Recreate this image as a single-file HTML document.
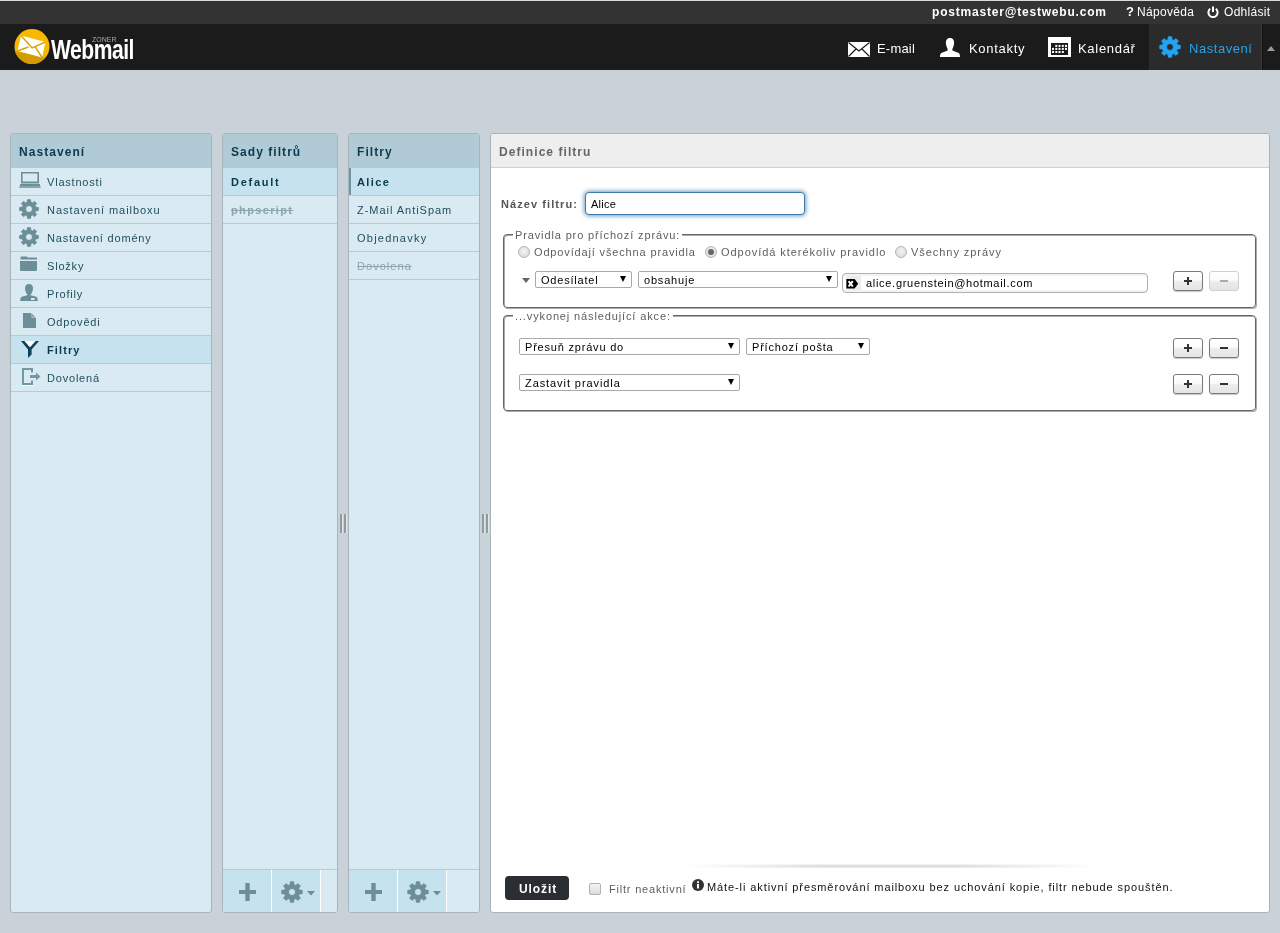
<!DOCTYPE html>
<html><head><meta charset="utf-8">
<style>
*{box-sizing:border-box}
html,body{margin:0;padding:0}
body{width:1280px;height:933px;overflow:hidden;position:relative;background:#cad2d9;font-family:"Liberation Sans",sans-serif;font-size:11px;color:#000}
.a{position:absolute;white-space:nowrap}
svg{position:absolute;display:block}
#top{position:absolute;left:0;top:0;width:1280px;height:24px;background:#333;border-top:1px solid #dcdcdc}
#nav{position:absolute;left:0;top:24px;width:1280px;height:46px;background:#1b1b1b}
.tl{color:#fff;font-size:12px;line-height:14px;letter-spacing:0.3px}
.nv{color:#fff;font-size:13px;line-height:16px;letter-spacing:0.55px}
.pn{position:absolute;top:133px;height:780px;border:1px solid #a9b3bb;border-radius:3px;background:#d9eaf2;overflow:hidden}
.ph{position:absolute;left:0;top:0;right:0;height:34px;background:#b0cbd6}
.ph span{position:absolute;left:8px;top:11px;font-weight:bold;font-size:12px;line-height:14px;letter-spacing:1.05px;color:#0b3a4e}
.row{position:absolute;left:0;right:0;height:28px;border-bottom:1px solid #b3ccd5}
.row span{position:absolute;left:36px;top:8px;font-size:11px;line-height:13px;letter-spacing:0.8px;color:#22505f}
.sel{background:#c6e2ee}
.sel span{font-weight:bold;color:#0b3a4e;letter-spacing:1.1px}
.ico{fill:#6b8e98}
.tb{position:absolute;left:0;right:0;bottom:0;height:43px;border-top:1px solid #b3ccd5;background:#d9eaf2}
.tbb{position:absolute;top:0;height:42px;width:49px;background:#c6e2ee;border-right:1px solid #fff}
.lbl{color:#5e5e5e;font-size:11px;line-height:13px;letter-spacing:0.8px}
.sl{position:absolute;height:17px;border:1px solid #a9a9a9;border-radius:2px;background:#fff}
.sl span{position:absolute;left:5px;top:2px;font-size:11px;line-height:13px;letter-spacing:0.8px;color:#000}
.sl i{position:absolute;top:4px;width:0;height:0;border-left:3.5px solid transparent;border-right:3.5px solid transparent;border-top:6px solid #000}
.btn{position:absolute;width:30px;height:20px;border:1px solid #7a7a7a;border-radius:3px;background:linear-gradient(#fff 0%,#fbfbfb 45%,#ececec 55%,#e4e4e4 100%);box-shadow:0 1px 1px rgba(0,0,0,.22)}
.btn b{position:absolute;background:#333}
.fs{position:absolute;border:1px solid #666;border-radius:4px;box-shadow:1px 1px 0 rgba(102,102,102,.55),inset 1px 1px 0 rgba(102,102,102,.55)}
.lg{position:absolute;background:#fff;padding:0 2px;color:#5e5e5e;font-size:11px;line-height:13px;letter-spacing:0.87px}
.radio{position:absolute;width:12px;height:12px;border-radius:50%;border:1px solid #b5b5b5;background:radial-gradient(circle at 50% 40%,#f4f4f4,#d6d6d6)}
</style></head>
<body style="will-change:transform">
<!-- top bar -->
<div id="top"></div>
<div class="a tl" style="left:932px;top:5px;font-weight:bold;letter-spacing:0.8px">postmaster@testwebu.com</div>
<div class="a tl" style="left:1126px;top:4px;font-weight:bold;font-size:13px;line-height:15px">?</div>
<div class="a tl" style="left:1137px;top:5px">Nápověda</div>
<svg style="left:1207px;top:6px" width="12" height="12" viewBox="0 0 12 12"><path d="M3.2,2.8 A4.6,4.6 0 1,0 8.8,2.8" fill="none" stroke="#fff" stroke-width="2"/><rect x="5" y="0.5" width="2" height="5.5" fill="#fff"/></svg>
<div class="a tl" style="left:1224px;top:5px">Odhlásit</div>

<!-- nav -->
<div id="nav"></div>
<svg style="left:14px;top:28px" width="36" height="37" viewBox="0 0 36 37">
 <defs><clipPath id="cc"><circle cx="18" cy="18.5" r="17.5"/></clipPath></defs>
 <circle cx="18" cy="18.5" r="17.5" fill="#f7b900"/>
 <path d="M0,22.5 L36,30.5 L36,37 L0,37Z" fill="#d29b00" clip-path="url(#cc)"/>
 <path d="M3.5,23 L7,7.5 L31.5,14 L28,29.5Z" fill="#fff"/>
 <path d="M7,7.5 L18,19.8 L31.5,14 M3.5,23 L14.5,19 M28,29.5 L21,18.5" fill="none" stroke="#dba600" stroke-width="1.4"/>
</svg>
<div class="a" style="left:92px;top:36px;color:#a8a8a8;font-size:7px;line-height:8px;letter-spacing:0">ZONER</div>
<div class="a" style="left:51px;top:36px;color:#fff;font-size:27px;line-height:28px;font-weight:bold;letter-spacing:-0.6px;transform:scaleX(0.78);transform-origin:0 0">Webmail</div>

<div class="a" style="left:1149px;top:24px;width:112px;height:46px;background:#2b2b2b"></div>
<div class="a" style="left:1261px;top:24px;width:1px;height:46px;background:#3b3b3b"></div>
<div class="a" style="left:1262px;top:24px;width:1px;height:46px;background:#111"></div>
<svg style="left:1267px;top:46px" width="8" height="5" viewBox="0 0 8 5"><path d="M4,0 L8,5 L0,5Z" fill="#999"/></svg>

<svg style="left:848px;top:42px" width="22" height="15" viewBox="0 0 22 15"><rect x="0" y="0" width="22" height="15" fill="#fff"/><path d="M0.5,0.5 L11,9 L21.5,0.5 M0.5,14.5 L8,7 M21.5,14.5 L14,7" fill="none" stroke="#1b1b1b" stroke-width="1.2"/></svg>
<div class="a nv" style="left:877px;top:41px;letter-spacing:0.2px">E-mail</div>
<svg style="left:940px;top:38px" width="20" height="19" viewBox="0 0 21 19" preserveAspectRatio="none"><path d="M10.5,0 C7,0 6,2.5 6.2,5.5 C6.4,8 7.5,10 8,11 L8,12.5 L1.5,15 C0.5,15.5 0,16.5 0,19 L21,19 C21,16.5 20.5,15.5 19.5,15 L13,12.5 L13,11 C13.5,10 14.6,8 14.8,5.5 C15,2.5 14,0 10.5,0Z" fill="#fff"/></svg>
<div class="a nv" style="left:969px;top:41px;letter-spacing:0.7px">Kontakty</div>
<svg style="left:1048px;top:37px" width="23" height="20" viewBox="0 0 23 20"><rect x="0" y="0" width="23" height="20" fill="#fff"/><rect x="3" y="6" width="17" height="12" fill="#1b1b1b"/><g fill="#fff"><rect x="7.3" y="7.9" width="2" height="2"/><rect x="10.5" y="7.9" width="2" height="2"/><rect x="13.8" y="7.9" width="2" height="2"/><rect x="17" y="7.9" width="2" height="2"/><rect x="4" y="10.9" width="2" height="2"/><rect x="7.3" y="10.9" width="2" height="2"/><rect x="10.5" y="10.9" width="2" height="2"/><rect x="13.8" y="10.9" width="2" height="2"/><rect x="17" y="10.9" width="2" height="2"/><rect x="4" y="14" width="2" height="2"/><rect x="7.3" y="14" width="2" height="2"/><rect x="10.5" y="14" width="2" height="2"/><rect x="13.8" y="14" width="2" height="2"/></g></svg>
<div class="a nv" style="left:1078px;top:41px;letter-spacing:0.7px">Kalendář</div>
<svg style="left:1159px;top:36px" width="22" height="22" viewBox="0 0 22 22"><path fill="#22a4f4" fill-rule="evenodd" stroke="#22a4f4" stroke-width="1" stroke-linejoin="round" d="M9.05,3.66 L9.36,0.83 L12.64,0.83 L12.95,3.66 L14.81,4.43 L17.03,2.65 L19.35,4.97 L17.57,7.19 L18.34,9.05 L21.17,9.36 L21.17,12.64 L18.34,12.95 L17.57,14.81 L19.35,17.03 L17.03,19.35 L14.81,17.57 L12.95,18.34 L12.64,21.17 L9.36,21.17 L9.05,18.34 L7.19,17.57 L4.97,19.35 L2.65,17.03 L4.43,14.81 L3.66,12.95 L0.83,12.64 L0.83,9.36 L3.66,9.05 L4.43,7.19 L2.65,4.97 L4.97,2.65 L7.19,4.43Z M7.50,11.00 a3.5,3.5 0 1,0 7.0,0 a3.5,3.5 0 1,0 -7.0,0Z"/></svg>
<div class="a nv" style="left:1189px;top:41px;color:#26a3ef">Nastavení</div>

<!-- panel 1 -->
<div class="pn" style="left:10px;width:202px">
 <div class="ph"><span>Nastavení</span></div>
 <div class="row" style="top:34px"><span>Vlastnosti</span></div>
 <div class="row" style="top:62px"><span style="letter-spacing:0.94px">Nastavení mailboxu</span></div>
 <div class="row" style="top:90px"><span>Nastavení domény</span></div>
 <div class="row" style="top:118px"><span>Složky</span></div>
 <div class="row" style="top:146px"><span>Profily</span></div>
 <div class="row" style="top:174px"><span>Odpovědi</span></div>
 <div class="row sel" style="top:202px"><span>Filtry</span></div>
 <div class="row" style="top:230px"><span>Dovolená</span></div>
</div>

<!-- panel 2 -->
<div class="pn" style="left:222px;width:116px">
 <div class="ph"><span>Sady filtrů</span></div>
 <div class="row sel" style="top:34px"><span style="left:8px;letter-spacing:1.75px">Default</span></div>
 <div class="row" style="top:62px"><span style="left:8px;font-weight:bold;color:#8ca6ae;text-decoration:line-through;letter-spacing:1.35px">phpscript</span></div>
 <div class="tb"><div class="tbb" style="left:0"></div><div class="tbb" style="left:49px"></div></div>
</div>

<!-- panel 3 -->
<div class="pn" style="left:348px;width:132px">
 <div class="ph"><span>Filtry</span></div>
 <div class="row sel" style="top:34px"><span style="left:8px;letter-spacing:1.4px">Alice</span><div style="position:absolute;left:0;top:0;width:2px;height:27px;background:#6e98a6"></div></div>
 <div class="row" style="top:62px"><span style="left:8px;letter-spacing:0.97px">Z-Mail AntiSpam</span></div>
 <div class="row" style="top:90px"><span style="left:8px;letter-spacing:1.23px">Objednavky</span></div>
 <div class="row" style="top:118px"><span style="left:8px;color:#8ca6ae;text-decoration:line-through;letter-spacing:1.04px">Dovolena</span></div>
 <div class="tb"><div class="tbb" style="left:0"></div><div class="tbb" style="left:49px"></div></div>
</div>

<!-- main panel -->
<div class="pn" style="left:490px;width:780px;background:#fff">
 <div class="ph" style="background:#eee;border-bottom:1px solid #cfcfcf;height:34px"><span style="color:#666">Definice filtru</span></div>
</div>


<!-- nav icons panel1 -->
<svg style="left:19px;top:171px" width="23" height="18" viewBox="0 0 23 18"><path fill="#6b8e98" fill-rule="evenodd" d="M2,1 L20,1 L20,12 L2,12Z M3.6,2.6 L18.4,2.6 L18.4,10.6 L3.6,10.6Z"/><rect x="2" y="12" width="18" height="1" fill="#a5c1c9"/><path d="M1.5,13 L20.5,13 L22,17 L0,17Z" fill="#86a7b0"/><path d="M1.5,13 L20.5,13 L21.2,15 L0.8,15Z" fill="#6b8e98"/></svg>
<svg style="left:19px;top:199px" width="20" height="20" viewBox="0 0 20 20"><path fill="#6b8e98" fill-rule="evenodd" stroke="#6b8e98" stroke-width="1" stroke-linejoin="round" d="M8.16,3.35 L8.50,0.72 L11.50,0.72 L11.84,3.35 L13.40,4.00 L15.50,2.38 L17.62,4.50 L16.00,6.60 L16.65,8.16 L19.28,8.50 L19.28,11.50 L16.65,11.84 L16.00,13.40 L17.62,15.50 L15.50,17.62 L13.40,16.00 L11.84,16.65 L11.50,19.28 L8.50,19.28 L8.16,16.65 L6.60,16.00 L4.50,17.62 L2.38,15.50 L4.00,13.40 L3.35,11.84 L0.72,11.50 L0.72,8.50 L3.35,8.16 L4.00,6.60 L2.38,4.50 L4.50,2.38 L6.60,4.00Z M6.50,10.00 a3.5,3.5 0 1,0 7.0,0 a3.5,3.5 0 1,0 -7.0,0Z"/></svg>
<svg style="left:19px;top:227px" width="20" height="20" viewBox="0 0 20 20"><path fill="#6b8e98" fill-rule="evenodd" stroke="#6b8e98" stroke-width="1" stroke-linejoin="round" d="M8.16,3.35 L8.50,0.72 L11.50,0.72 L11.84,3.35 L13.40,4.00 L15.50,2.38 L17.62,4.50 L16.00,6.60 L16.65,8.16 L19.28,8.50 L19.28,11.50 L16.65,11.84 L16.00,13.40 L17.62,15.50 L15.50,17.62 L13.40,16.00 L11.84,16.65 L11.50,19.28 L8.50,19.28 L8.16,16.65 L6.60,16.00 L4.50,17.62 L2.38,15.50 L4.00,13.40 L3.35,11.84 L0.72,11.50 L0.72,8.50 L3.35,8.16 L4.00,6.60 L2.38,4.50 L4.50,2.38 L6.60,4.00Z M6.50,10.00 a3.5,3.5 0 1,0 7.0,0 a3.5,3.5 0 1,0 -7.0,0Z"/></svg>
<svg style="left:20px;top:256px" width="18" height="16" viewBox="0 0 18 16"><path d="M0.5,1.2 Q0.5,0.6 1.2,0.6 L6.5,0.6 Q7.3,0.6 7.6,1.5 L17,1.5 L17,3.6 L0.5,3.6Z" fill="#6b8e98"/><path d="M0,5 L17,5 L17,14 Q17,15 16,15 L1,15 Q0,15 0,14Z" fill="#6b8e98"/></svg>
<svg style="left:20px;top:284px" width="18" height="17" viewBox="0 0 18 17"><path d="M9,0 C6.3,0 5,1.8 5,4.3 C5,7 6.3,9.5 7.3,10.6 L7.3,11.2 L2.5,12.6 C1,13.1 0.3,14 0.3,15.5 L0.3,17 L17.7,17 L17.7,15.5 C17.7,14 17,13.1 15.5,12.6 L10.7,11.2 L10.7,10.6 C11.7,9.5 13,7 13,4.3 C13,1.8 11.7,0 9,0Z" fill="#6b8e98"/><rect x="11" y="14" width="3.6" height="2" fill="#d9eaf2"/></svg>
<svg style="left:23px;top:313px" width="14" height="15" viewBox="0 0 14 15"><path d="M0,0 L8,0 L13,5 L13,15 L0,15Z" fill="#6b8e98"/><path d="M8.6,0 L13,4.4 L8.6,4.4Z" fill="#d9eaf2"/><path d="M9.2,1 L12,3.8 L9.2,3.8Z" fill="#6b8e98"/></svg>
<svg style="left:21px;top:341px" width="18" height="18" viewBox="0 0 18 18"><path d="M0,0 L3.4,0 L9,6.2 L14.6,0 L18,0 L10.6,8.6 L10.6,13.6 L7,17 L7,8.6Z" fill="#0d4157"/><path d="M3.6,0 L14.4,0 L9,6Z" fill="#fff"/></svg>
<svg style="left:22px;top:368px" width="19" height="18" viewBox="0 0 19 18"><path d="M0,0 L11,0 L11,4.5 L9,4.5 L9,2 L2,2 L2,15 L9,15 L9,12.5 L11,12.5 L11,17 L0,17Z" fill="#7199a3"/><rect x="0" y="17" width="11" height="1" fill="#fff"/><path d="M8,7 L14,7 L14,4.5 L18.5,8.5 L14,12.5 L14,10 L8,10Z" fill="#7199a3"/></svg>

<!-- toolbars -->
<svg style="left:239px;top:883px" width="17" height="18" viewBox="0 0 17 18"><rect x="0" y="7" width="17" height="4" fill="#6b8e98"/><rect x="6.3" y="0" width="4.4" height="18" fill="#6b8e98"/></svg>
<svg style="left:281px;top:881px" width="22" height="22" viewBox="0 0 22 22"><path fill="#6b8e98" fill-rule="evenodd" stroke="#6b8e98" stroke-width="1" stroke-linejoin="round" d="M9.05,3.66 L9.36,0.83 L12.64,0.83 L12.95,3.66 L14.81,4.43 L17.03,2.65 L19.35,4.97 L17.57,7.19 L18.34,9.05 L21.17,9.36 L21.17,12.64 L18.34,12.95 L17.57,14.81 L19.35,17.03 L17.03,19.35 L14.81,17.57 L12.95,18.34 L12.64,21.17 L9.36,21.17 L9.05,18.34 L7.19,17.57 L4.97,19.35 L2.65,17.03 L4.43,14.81 L3.66,12.95 L0.83,12.64 L0.83,9.36 L3.66,9.05 L4.43,7.19 L2.65,4.97 L4.97,2.65 L7.19,4.43Z M7.40,11.00 a3.6,3.6 0 1,0 7.2,0 a3.6,3.6 0 1,0 -7.2,0Z"/></svg>
<svg style="left:307px;top:891px" width="8" height="5" viewBox="0 0 8 5"><path d="M0,0 L8,0 L4,4.5Z" fill="#6b8e98"/></svg>
<svg style="left:365px;top:883px" width="17" height="18" viewBox="0 0 17 18"><rect x="0" y="7" width="17" height="4" fill="#6b8e98"/><rect x="6.3" y="0" width="4.4" height="18" fill="#6b8e98"/></svg>
<svg style="left:407px;top:881px" width="22" height="22" viewBox="0 0 22 22"><path fill="#6b8e98" fill-rule="evenodd" stroke="#6b8e98" stroke-width="1" stroke-linejoin="round" d="M9.05,3.66 L9.36,0.83 L12.64,0.83 L12.95,3.66 L14.81,4.43 L17.03,2.65 L19.35,4.97 L17.57,7.19 L18.34,9.05 L21.17,9.36 L21.17,12.64 L18.34,12.95 L17.57,14.81 L19.35,17.03 L17.03,19.35 L14.81,17.57 L12.95,18.34 L12.64,21.17 L9.36,21.17 L9.05,18.34 L7.19,17.57 L4.97,19.35 L2.65,17.03 L4.43,14.81 L3.66,12.95 L0.83,12.64 L0.83,9.36 L3.66,9.05 L4.43,7.19 L2.65,4.97 L4.97,2.65 L7.19,4.43Z M7.40,11.00 a3.6,3.6 0 1,0 7.2,0 a3.6,3.6 0 1,0 -7.2,0Z"/></svg>
<svg style="left:433px;top:891px" width="8" height="5" viewBox="0 0 8 5"><path d="M0,0 L8,0 L4,4.5Z" fill="#6b8e98"/></svg>

<!-- splitters -->
<div class="a" style="left:340px;top:514px;width:2px;height:19px;background:#8d9ba3"></div><div class="a" style="left:342px;top:514px;width:1px;height:19px;background:#e2e6e9"></div>
<div class="a" style="left:344px;top:514px;width:2px;height:19px;background:#8d9ba3"></div><div class="a" style="left:346px;top:514px;width:1px;height:19px;background:#e2e6e9"></div>
<div class="a" style="left:482px;top:514px;width:2px;height:19px;background:#8d9ba3"></div><div class="a" style="left:484px;top:514px;width:1px;height:19px;background:#e2e6e9"></div>
<div class="a" style="left:486px;top:514px;width:2px;height:19px;background:#8d9ba3"></div><div class="a" style="left:488px;top:514px;width:1px;height:19px;background:#e2e6e9"></div>

<!-- main content -->
<div class="a" style="left:501px;top:198px;font-weight:bold;color:#555;font-size:11px;line-height:13px;letter-spacing:1.08px">Název filtru:</div>
<div class="a" style="left:585px;top:192px;width:220px;height:23px;border:1px solid #3b7cab;border-radius:4px;box-shadow:0 0 4px 1px rgba(58,123,171,.75);background:#fff"></div>
<div class="a" style="left:591px;top:198px;font-size:11px;line-height:13px;letter-spacing:0.25px">Alice</div>

<div class="fs" style="left:503px;top:234px;width:753px;height:74px"></div>
<div class="lg" style="left:513px;top:229px">Pravidla pro příchozí zprávu:</div>
<div class="radio" style="left:518px;top:246px"></div>
<div class="a lbl" style="left:534px;top:246px;letter-spacing:0.85px">Odpovídají všechna pravidla</div>
<div class="radio" style="left:705px;top:246px"><div style="position:absolute;left:2px;top:2px;width:6px;height:6px;border-radius:50%;background:#666"></div></div>
<div class="a lbl" style="left:721px;top:246px;letter-spacing:0.95px">Odpovídá kterékoliv pravidlo</div>
<div class="radio" style="left:895px;top:246px"></div>
<div class="a lbl" style="left:911px;top:246px;letter-spacing:0.95px">Všechny zprávy</div>

<svg style="left:522px;top:278px" width="8" height="5" viewBox="0 0 8 5"><path d="M0,0 L8,0 L4,5Z" fill="#666"/></svg>
<div class="sl" style="left:535px;top:271px;width:97px"><span>Odesílatel</span><i style="left:84px"></i></div>
<div class="sl" style="left:638px;top:271px;width:200px"><span>obsahuje</span><i style="left:187px"></i></div>
<div class="a" style="left:842px;top:273px;width:306px;height:20px;border:1px solid #b0b0b0;border-radius:4px;background:#fff;box-shadow:inset 0 2px 0 #f3f3f3,inset 0 -2px 0 #f3f3f3"></div>
<div class="a" style="left:846px;top:276px;width:15px;height:14px;background:#ececec"></div>
<svg style="left:846px;top:279px" width="13" height="10" viewBox="0 0 13 10"><path d="M0.4,0 L8.6,0 L12.2,4.8 L8.6,9.6 L0.4,9.6Z" fill="#000"/><path d="M2.6,2.1 L6.8,7.5 M6.8,2.1 L2.6,7.5" stroke="#fff" stroke-width="2"/></svg>
<div class="a" style="left:866px;top:277px;font-size:11px;line-height:13px;letter-spacing:0.7px">alice.gruenstein@hotmail.com</div>
<div class="btn" style="left:1173px;top:271px"><b style="left:10px;top:8px;width:8px;height:2px"></b><b style="left:13px;top:5px;width:2px;height:8px"></b></div>
<div class="btn" style="left:1209px;top:271px;border-color:#d0d0d0;box-shadow:none"><b style="left:10px;top:8px;width:8px;height:2px;background:#aaa"></b></div>

<div class="fs" style="left:503px;top:315px;width:753px;height:96px"></div>
<div class="lg" style="left:513px;top:310px">...vykonej následující akce:</div>
<div class="sl" style="left:519px;top:338px;width:221px"><span>Přesuň zprávu do</span><i style="left:208px"></i></div>
<div class="sl" style="left:746px;top:338px;width:124px"><span>Příchozí pošta</span><i style="left:111px"></i></div>
<div class="btn" style="left:1173px;top:338px"><b style="left:10px;top:8px;width:8px;height:2px"></b><b style="left:13px;top:5px;width:2px;height:8px"></b></div>
<div class="btn" style="left:1209px;top:338px"><b style="left:10px;top:8px;width:8px;height:2px"></b></div>
<div class="sl" style="left:519px;top:374px;width:221px"><span style="letter-spacing:0.92px">Zastavit pravidla</span><i style="left:208px"></i></div>
<div class="btn" style="left:1173px;top:374px"><b style="left:10px;top:8px;width:8px;height:2px"></b><b style="left:13px;top:5px;width:2px;height:8px"></b></div>
<div class="btn" style="left:1209px;top:374px"><b style="left:10px;top:8px;width:8px;height:2px"></b></div>

<!-- bottom bar -->
<div class="a" style="left:685px;top:864px;width:412px;height:4px;background:linear-gradient(to right,#fff,rgba(255,255,255,0) 35%,rgba(255,255,255,0) 65%,#fff),linear-gradient(#f6f6f6,#e0e0e0 40%,#d8d8d8 75%,#fafafa)"></div>
<div class="a" style="left:505px;top:876px;width:64px;height:24px;background:#2a2d31;border-radius:4px"></div>
<div class="a" style="left:519px;top:882px;color:#fff;font-weight:bold;font-size:12px;line-height:14px;letter-spacing:0.9px">Uložit</div>
<div class="a" style="left:589px;top:883px;width:12px;height:12px;border:1px solid #b0b0b0;border-radius:2px;background:linear-gradient(#f4f4f4,#dcdcdc)"></div>
<div class="a lbl" style="left:609px;top:883px">Filtr neaktivní</div>
<svg style="left:692px;top:879px" width="12" height="12" viewBox="0 0 12 12"><circle cx="6" cy="6" r="6" fill="#333"/><rect x="5" y="5" width="2" height="4.5" fill="#fff"/><rect x="5" y="2.3" width="2" height="1.8" fill="#fff"/></svg>
<div class="a" style="left:707px;top:881px;color:#111;font-size:11px;line-height:13px;letter-spacing:0.9px">Máte-li aktivní přesměrování mailboxu bez uchování kopie, filtr nebude spouštěn.</div>

</body></html>
